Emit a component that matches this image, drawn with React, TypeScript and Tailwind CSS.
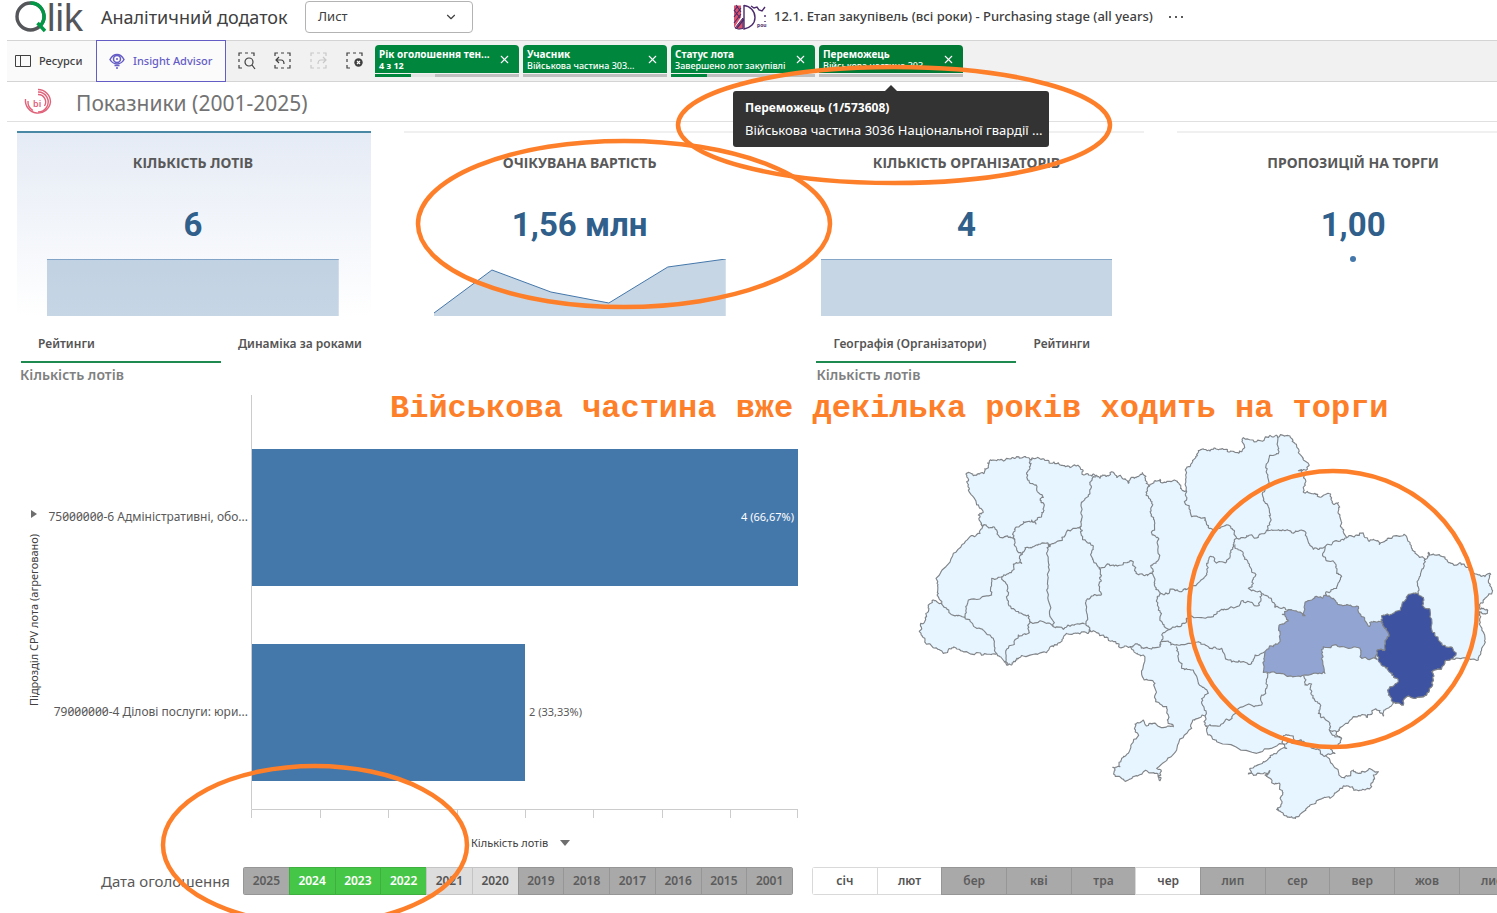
/**
 * Analytics dashboard: KPI cards, CPV bar chart, region map and date filters,
 * with hand-drawn style notes laid over the sheet.
 */

import { ChevronDown, X } from 'lucide-react';
import clsx from 'clsx';
import type { ReactNode } from 'react';

type Point = [number, number];

interface Selection {
  title: string;
  value: string;
  bold?: boolean;
  hovered?: boolean;
  // progress segments in percent of the chip width
  green: number;
  light: number;
}

const SELECTIONS: Selection[] = [
  { title: 'Рік оголошення тен...', value: '4 з 12', bold: true, green: 25, light: 17 },
  { title: 'Учасник', value: 'Військова частина 303...', green: 0, light: 0 },
  { title: 'Статус лота', value: 'Завершено лот закупівлі', green: 25, light: 0 },
  { title: 'Переможець', value: 'Військова частина 303...', hovered: true, green: 0, light: 0 },
];

const KPIS: { title: string; value: string; points: Point[]; active?: boolean }[] = [
  { title: 'КІЛЬКІСТЬ ЛОТІВ', value: '6', points: [[0, 0], [292, 0]], active: true },
  {
    title: 'ОЧІКУВАНА ВАРТІСТЬ',
    value: '1,56 млн',
    points: [[0, 54], [58, 11], [117, 33], [175, 44], [234, 8], [292, 0]],
  },
  { title: 'КІЛЬКІСТЬ ОРГАНІЗАТОРІВ', value: '4', points: [[0, 0], [292, 0]] },
  { title: 'ПРОПОЗИЦІЙ НА ТОРГИ', value: '1,00', points: [] },
];

const YEARS = ['2025', '2024', '2023', '2022', '2021', '2020', '2019', '2018', '2017', '2016', '2015', '2001'];
const MONTHS = ['січ', 'лют', 'бер', 'кві', 'тра', 'чер', 'лип', 'сер', 'вер', 'жов', 'лис', 'гру'];

const BARS = [
  { label: '75000000-6 Адміністративні, обо...', value: '4 (66,67%)', y: 62, width: 546 },
  { label: '79000000-4 Ділові послуги: юри...', value: '2 (33,33%)', y: 257, width: 273 },
];

const TICKS = [251, 320, 388, 457, 525, 593, 662, 730, 797];

const MAINLAND =
  '198,162 205,157 225,165 240,160 262,145 268,123 290,122 330,117 350,110 390,118 400,115 432,117 462,126 490,137 512,142 538,140 546,163 565,165 590,166 600,175 615,165 625,168 640,157 650,172 662,167 675,176 685,190 692,175 708,173 727,158 740,185 745,200 762,185 780,178 790,188 828,182 842,195 850,212 860,215 857,165 865,140 885,115 895,92 930,93 945,85 980,88 1005,97 1028,88 1030,53 1085,63 1110,46 1132,50 1170,48 1190,78 1195,97 1210,115 1227,135 1222,148 1195,152 1212,165 1215,190 1210,217 1245,220 1255,230 1292,222 1298,250 1315,248 1320,285 1325,322 1340,353 1370,345 1390,340 1405,362 1420,358 1438,373 1470,355 1512,343 1530,372 1545,395 1575,417 1583,412 1585,397 1600,402 1630,410 1650,428 1668,435 1680,428 1700,442 1725,462 1755,470 1772,463 1765,482 1777,515 1750,540 1738,555 1740,568 1760,568 1762,575 1750,582 1738,575 1738,612 1755,655 1745,685 1735,720 1667,715 1645,720 1625,745 1595,755 1595,790 1580,825 1520,830 1505,855 1480,848 1455,870 1450,888 1440,872 1425,868 1402,892 1395,884 1360,890 1320,922 1310,935 1325,955 1315,978 1290,982 1305,1000 1270,1007 1260,990 1230,975 1200,960 1170,947 1150,952 1150,972 1070,1000 950,965 925,945 920,920 917,918 915,888 880,900 875,925 830,990 770,1045 783,1050 780,1082 768,1060 740,1052 702,1070 685,1080 645,1065 638,1042 660,1040 665,1015 685,1000 713,950 705,912 730,900 737,915 760,910 782,922 820,920 802,900 800,860 767,845 765,790 727,770 730,705 702,695 690,680 660,683 640,665 610,645 568,628 565,640 530,640 500,640 490,655 460,680 440,698 370,708 350,715 335,735 320,735 300,710 290,700 250,705 200,695 160,683 130,700 100,683 75,660 58,635 62,610 80,590 85,560 100,540 125,552 115,520 108,475 160,400 210,350 240,340 243,312 235,285 248,278 230,255 205,210 200,185 198,162';

const CRIMEA =
  '1150,972 1160,985 1115,1005 1090,1025 1050,1045 1045,1062 1070,1062 1110,1052 1095,1065 1115,1088 1140,1092 1148,1120 1142,1160 1130,1168 1150,1180 1170,1192 1195,1190 1225,1160 1260,1138 1290,1135 1320,1105 1345,1098 1370,1110 1415,1100 1420,1065 1435,1055 1405,1048 1380,1060 1360,1050 1352,1067 1325,1072 1280,1010 1258,985 1200,962 1150,972';

const DNIPRO =
  '1215,587 1215,548 1235,540 1255,532 1280,527 1300,535 1325,555 1370,558 1385,590 1405,618 1420,605 1447,605 1458,625 1462,655 1455,688 1432,690 1430,718 1385,715 1380,685 1325,680 1270,680 1265,715 1275,760 1240,760 1180,770 1140,760 1090,757 1095,695 1120,680 1140,660 1137,617 1165,603 1147,583 1175,570 1215,587';

const DONETSK =
  '1445,587 1475,583 1505,560 1525,523 1555,522 1572,540 1572,562 1590,568 1595,628 1615,660 1645,682 1668,705 1645,720 1625,745 1595,755 1595,790 1580,825 1520,830 1505,855 1480,848 1470,830 1463,810 1495,785 1475,765 1455,740 1435,722 1432,690 1455,688 1462,655 1458,625 1447,605 1445,587';

// Inner borders between regions
const BORDERS = [
  '390,118 388,140 383,165 390,190 410,205 430,232 420,240 433,255 425,285 410,300 408,312 395,300 370,305 345,325 340,345 345,358',
  '243,312 262,320 285,325 305,353 325,352 345,358',
  '345,358 350,390 362,405 365,430 340,432 335,455 305,470',
  '362,405 375,383 400,380 415,373 445,372 450,380 480,362 500,335 540,320',
  '590,166 570,190 565,225 543,255 545,300 540,320',
  '540,320 548,350 560,365 580,378 575,410 597,442',
  '597,442 630,437 665,435 700,425 708,460 735,467 757,460',
  '745,200 738,225 755,250 752,280 763,300 757,345 773,352 777,415 755,435 757,460',
  '597,442 603,470 598,490 605,522 570,535 558,545 558,605 568,628',
  '445,372 440,400 448,450 440,510 450,590 460,620',
  '305,470 315,485 322,540 345,570 385,585 390,605 430,605 460,620 490,628 515,615 558,612',
  '305,470 275,475 275,525 205,540 195,592 150,580 125,552',
  '195,592 230,625 250,630 280,655 290,700',
  '390,605 388,638 355,645 325,685 320,735',
  '757,460 765,500 780,522',
  '780,522 800,520 810,507 845,515 870,500 885,497 915,470 920,430 935,410 945,425 980,425 990,400 1000,375 1010,355',
  '780,522 770,545 780,590 805,628 785,645 783,665',
  '805,628 840,620 860,605 875,588 940,590 965,568 1010,560 1030,543 1070,558 1080,530 1085,520',
  '690,680 715,675 730,685 780,680 783,665 825,675 870,670 895,665 925,680 965,685 985,720 1030,725 1055,730 1065,705 1095,695',
  '1005,373 1030,400 1045,430 1065,460 1060,490 1045,505 1085,520',
  '1085,520 1115,540 1125,562 1165,570 1175,570',
  '860,215 853,245 875,290 915,293 925,320 940,330 985,315 1000,330 1010,355',
  '1010,355 1040,347 1075,352 1100,330',
  '1132,50 1137,95 1105,125 1103,170 1093,215 1090,240 1108,270 1108,310 1100,330',
  '1100,330 1140,332 1175,338 1205,330 1220,350 1240,388 1275,380 1310,362 1340,353',
  '1275,380 1270,410 1305,430 1310,460 1325,470 1310,505 1280,515 1280,527',
  '1575,417 1565,450 1555,480 1555,522',
  '828,680 835,705 845,745 880,750 895,790 925,820 905,845 915,888',
  '1100,760 1100,805 1085,825 1085,855 1020,862 985,900 960,918 917,918',
  '1210,768 1215,795 1235,792 1235,825 1258,850 1255,880 1290,910 1288,930 1325,955',
  '1288,930 1310,935',
];

function noise(a: number, b: number) {
  const n = Math.sin(a * 12.9898 + b * 78.233) * 43758.5453;
  return n - Math.floor(n) - 0.5;
}

/**
 * Splits every segment a few times with a small repeatable offset, taken from
 * the midpoint, so that a border shared by two regions gets the same shape.
 */
function roughen(source: string) {
  let pts = source.split(' ').map((p) => p.split(',').map(Number) as Point);
  for (let pass = 0; pass < 3; pass++) {
    const next: Point[] = [pts[0]];
    for (let i = 1; i < pts.length; i++) {
      const a = pts[i - 1];
      const b = pts[i];
      const mx = (a[0] + b[0]) / 2;
      const my = (a[1] + b[1]) / 2;
      const len = Math.hypot(b[0] - a[0], b[1] - a[1]);
      const amp = Math.min(len * 0.7, 9);
      next.push([mx + noise(mx, my) * amp, my + noise(my, mx) * amp], b);
    }
    pts = next;
  }
  return pts.map((p) => p.map((v) => v.toFixed(1)).join(',')).join(' ');
}

function QlikLogo() {
  return (
    <svg width="70" height="34" viewBox="0 0 70 34" className="overflow-visible" aria-label="Qlik">
      <circle cx="15.5" cy="16.5" r="13.5" fill="none" stroke="#54565a" strokeWidth="3.4" />
      <path d="M15.5 3A13.5 13.5 0 0 1 25.4 25.7" fill="none" stroke="#009845" strokeWidth="3.4" />
      <path d="M22.5 23L30 31" stroke="#009845" strokeWidth="3.4" />
      <text x="32" y="31" fontSize="38" fill="#54565a" fontFamily="Liberation Sans, sans-serif">
        lik
      </text>
    </svg>
  );
}

function AppIcon() {
  return (
    <svg width="34" height="26" viewBox="0 0 34 26" fill="none" className="overflow-visible">
      <path d="M1 1.500H8V13L1 24Z" fill="#d9536f" />
      <path d="M1 7L5 2M1 13L8 4M1 19L8 10M3 1L8 8M1 6L7 14" stroke="#4b2a6b" strokeWidth="1.100" />
      <path d="M2 24L10 14V24.500Q5 26 2 24Z" fill="#d9536f" stroke="#4b2a6b" />
      <path d="M11 1V15M11 1.500C17 2 22 7 22 13.500S17 24 11 25V15L4 24" stroke="#4b2a6b" strokeWidth="1.400" />
      <path d="M18 2L21 4L24 3L26 6L29 7L32 3M32 11V13M32 17V18" stroke="#4b2a6b" strokeWidth="1.400" />
      <text x="24" y="23" fontSize="5" fill="#4b2a6b" fontWeight="700" fontFamily="Noto Sans, sans-serif">pou</text>
    </svg>
  );
}

function BiLogo() {
  return (
    <svg width="28" height="28" viewBox="0 0 28 28" fill="none" stroke="#e0637a" strokeWidth="1.400">
      <path d="M1.500 11A12.500 12.500 0 0 0 26.500 14A12.500 12.500 0 0 0 14 1.500" />
      <path d="M14 4A10 10 0 0 1 22.500 19.500A10 10 0 0 1 14 24" />
      <path d="M14 6.500A7.500 7.500 0 0 1 20.500 18" />
      <path d="M4 13A10 10 0 0 0 9 22.500" />
      <text x="9" y="18.500" fontSize="9" fontWeight="600" stroke="none" fill="#e0637a" fontFamily="Noto Sans, sans-serif">bi</text>
    </svg>
  );
}

function InsightIcon() {
  return (
    <svg width="16" height="16" viewBox="0 0 16 16" fill="none" stroke="#655dc6" strokeWidth="1.500">
      <path d="M1 6.500C3 3 5.500 1.500 8 1.500S13 3 15 6.500C14 8.500 11 11 8 11S2 8.500 1 6.500Z" />
      <circle cx="8" cy="6" r="3.500" />
      <circle cx="8" cy="6" r="1" fill="#655dc6" stroke="none" />
      <path d="M5.500 12.500H10.500M7 15H9" />
    </svg>
  );
}

function ToolButton({ label, disabled, children }: { label: string; disabled?: boolean; children: ReactNode }) {
  return (
    <button
      type="button"
      aria-label={label}
      disabled={disabled}
      className={clsx('flex h-full w-9 items-center justify-center', disabled ? 'text-[#c8c8c8]' : 'text-[#404040]')}
    >
      <svg width="18" height="18" viewBox="0 0 18 18" fill="none" stroke="currentColor" strokeWidth="1.200">
        {children}
      </svg>
    </button>
  );
}

function SelectionChip({ title, value, bold, hovered, green, light }: Selection) {
  return (
    <div className="relative w-36">
      <div className={clsx('flex h-7 items-center rounded-t pl-1 pr-2 text-white', hovered ? 'bg-[#007a35]' : 'bg-[#00873d]')}>
        <div className="min-w-0 flex-1 whitespace-nowrap">
          <div className="h-3 text-[10px] font-bold leading-3">{title}</div>
          <div className={clsx('h-[11px] text-[9px] leading-[11px]', bold ? 'font-bold' : 'font-medium')}>{value}</div>
        </div>
        <button type="button" aria-label={`Очистити ${title}`}>
          <X size={13} strokeWidth={2} />
        </button>
      </div>
      <div className="mt-px flex h-[3px] bg-[#bfbfbf]">
        <div className="bg-[#00873d]" style={{ width: `${green}%` }} />
        <div className="bg-[#e4e4e4]" style={{ width: `${light}%` }} />
      </div>
      {hovered && (
        <div role="tooltip" className="absolute left-1/2 top-[46px] z-10 w-[316px] -translate-x-1/2 rounded-[3px] bg-[#333] px-3 py-[6px] text-white">
          <svg className="absolute -top-[6px] left-1/2 -translate-x-1/2" width="12" height="6" viewBox="0 0 12 6">
            <path d="M0 6L6 0L12 6Z" fill="#333" />
          </svg>
          <div className="text-[12px] font-bold leading-[22px]">Переможець (1/573608)</div>
          <div className="whitespace-nowrap text-[13px] leading-[22px]">Військова частина 3036 Національної гвардії ...</div>
        </div>
      )}
    </div>
  );
}

function KpiCard({ title, value, points, active }: (typeof KPIS)[number]) {
  const line = points.map((p) => p.join(',')).join(' ');
  return (
    <div
      className={clsx(
        'flex h-[185px] flex-col items-center border-t-2 pl-[30px] pr-8',
        active ? 'border-[#4a89a5] bg-linear-to-b from-[#e5ebf5] to-white' : 'border-[#f0f0f0]',
      )}
    >
      <h2 className="mt-[18px] whitespace-nowrap text-[14px] font-bold leading-6 text-[#595959]">{title}</h2>
      <div className="mt-[30px] font-[Roboto,sans-serif] text-[33px] font-bold leading-10 text-[#2f5f8a]">{value}</div>
      {points.length > 0 ? (
        <svg className="mt-auto h-[57px] w-full" viewBox="0 0 292 57" preserveAspectRatio="none">
          <polygon points={`${line} 292,57 0,57`} fill="#4477aa" fillOpacity="0.3" />
          <polyline points={line} fill="none" stroke="#4477aa" vectorEffect="non-scaling-stroke" />
        </svg>
      ) : (
        <div className="mt-[11px] size-[6px] rounded-full bg-[#4477aa]" />
      )}
    </div>
  );
}

function Tabs({ items }: { items: string[] }) {
  return (
    <div role="tablist" className="flex h-[37px] text-[12px] font-semibold text-[#545454]">
      {items.map((item, i) => (
        <button
          key={item}
          type="button"
          role="tab"
          aria-selected={i === 0}
          className={clsx('w-[200px] whitespace-nowrap border-b-2 pl-[17px] text-left', i === 0 ? 'border-[#1f8a50]' : 'border-transparent')}
        >
          {item}
        </button>
      ))}
    </div>
  );
}

function BarChart() {
  return (
    <svg width="812" height="470" viewBox="0 0 812 470" className="text-[11px]" fill="#595959">
      <path d="M31 123L37 127L31 131Z" fill="#6e6e6e" />
      <text transform="translate(38 319) rotate(-90)" fill="#404040">
        Підрозділ CPV лота (агреговано)
      </text>
      {BARS.map((bar, i) => (
        <g key={bar.label}>
          <text x="248" y={bar.y + 72} textAnchor="end" className="text-[12px] [font-feature-settings:'zero']">
            {bar.label}
          </text>
          <rect x="252" y={bar.y} width={bar.width} height="137" fill="#4477aa" />
          {i === 0 ? (
            <text x="794" y={bar.y + 72} textAnchor="end" fill="#fff">{bar.value}</text>
          ) : (
            <text x={256 + bar.width} y={bar.y + 72}>{bar.value}</text>
          )}
        </g>
      ))}
      <path d={`M251.500 8V422.500H798${TICKS.map((x) => `M${x + 0.5} 423V431`).join('')}`} fill="none" stroke="#ccc" />
      <text x="471" y="460" fill="#404040">Кількість лотів</text>
      <path d="M560 453H570L565 459Z" fill="#6e6e6e" />
    </svg>
  );
}

function RegionMap() {
  return (
    <svg width="597" height="410" viewBox="0 0 1791 1230" fill="none" stroke="#808488" strokeWidth="3.400" strokeLinejoin="round">
      <polygon points={roughen(CRIMEA)} fill="#e6f5ff" />
      <polygon points={roughen(MAINLAND)} fill="#e6f5ff" />
      {BORDERS.map((border) => (
        <polyline key={border} points={roughen(border)} />
      ))}
      <polygon points={roughen(DNIPRO)} fill="#92a4d2" />
      <polygon points={roughen(DONETSK)} fill="#3d52a1" />
    </svg>
  );
}

function yearStyle(index: number) {
  if (index >= 1 && index <= 3) return 'border-[#3fb03f] bg-[#46c646] text-white';
  if (index === 4 || index === 5) return 'border-[#c4c4c4] bg-[#ddd] text-[#545454]';
  return 'border-[#969696] bg-[#a9a9a9] text-[#5c5c5c]';
}

function monthStyle(index: number) {
  return [0, 1, 5].includes(index)
    ? 'border-[#d9d9d9] bg-white text-[#545454]'
    : 'border-[#969696] bg-[#a9a9a9] text-[#5c5c5c]';
}

function FilterStrip({ items, style }: { items: string[]; style: (index: number) => string }) {
  return (
    <div className="flex h-7 flex-1 overflow-hidden rounded-[3px] text-[12px] font-semibold">
      {items.map((item, i) => (
        <button key={item} type="button" className={clsx('min-w-0 flex-1 border-y border-l last:border-r', style(i))}>
          {item}
        </button>
      ))}
    </div>
  );
}

/**
 * Orange marker notes drawn over the sheet
 */
function Annotations() {
  return (
    <>
      <svg className="pointer-events-none absolute inset-0 z-20 h-full w-full" fill="none" stroke="#fd7f2a" strokeWidth="4.500">
        <ellipse cx="894" cy="125" rx="216" ry="58" />
        <ellipse cx="624" cy="224" rx="206" ry="83" />
        <ellipse cx="315" cy="845" rx="152" ry="79" />
        <ellipse cx="1333" cy="609" rx="144" ry="138" />
      </svg>
      <p className="absolute left-[390px] top-[391px] z-20 whitespace-nowrap font-['Liberation_Mono',monospace] text-[32px] font-bold leading-9 text-[#fd7f2a]">
        Військова частина вже декілька років ходить на торги
      </p>
    </>
  );
}

export default function App() {
  return (
    <div className="relative min-h-screen overflow-hidden bg-white font-['Noto_Sans',sans-serif] text-[#404040]">
      <header className="flex h-10 items-center">
        <div className="flex w-[733px] shrink-0 items-center pb-[6px] pl-[15px]">
          <QlikLogo />
          <span className="ml-4 w-[204px] whitespace-nowrap text-[18px]">Аналітичний додаток</span>
          <button type="button" className="flex h-8 w-[168px] items-center justify-between rounded border border-[#b3b3b3] pl-3 pr-[14px] text-[13px]">
            Лист
            <ChevronDown size={14} strokeWidth={2} />
          </button>
        </div>
        <div className="flex items-center pb-[6px]">
          <AppIcon />
          <h1 className="ml-[7px] whitespace-nowrap text-[13px] font-medium">12.1. Етап закупівель (всі роки) - Purchasing stage (all years)</h1>
          <button type="button" aria-label="Більше" className="ml-4 flex gap-1">
            <span className="size-[2px] bg-[#595959]" />
            <span className="size-[2px] bg-[#595959]" />
            <span className="size-[2px] bg-[#595959]" />
          </button>
        </div>
      </header>

      <div className="ml-[7px] flex h-[42px] border-y border-[#d4d4d4] bg-[#f1f1f1]">
        <button type="button" className="flex w-[89px] items-center gap-2 bg-[#fafafa] pl-2 text-[11px] font-medium">
          <svg width="16" height="12" viewBox="0 0 16 12" fill="none" stroke="#404040">
            <path d="M0.500 0.500H15.500V11.500H0.500ZM5.500 0.500V11.500" />
          </svg>
          Ресурси
        </button>
        <button
          type="button"
          className="-my-px flex w-[130px] items-center gap-2 border border-[#655dc6] bg-[#fbfbfb] pl-3 text-[11px] font-medium text-[#655dc6]"
        >
          <InsightIcon />
          Insight Advisor
        </button>
        <div className="ml-[3px] flex">
          <ToolButton label="Розумний пошук">
            <path d="M1 4V1H4M7 1H10M13 1H16V4M1 7V10M1 13V16H4" />
            <circle cx="11" cy="10" r="4" />
            <path d="M14 13L17 17" />
          </ToolButton>
          <ToolButton label="Крок назад">
            <path d="M1 4V1H4M7 1H10M13 1H16V4M16 7V10M16 13V16H13M10 16H7M4 16H1V13" />
            <path d="M5 5L2 8L5 11M2 8H7Q10 8 10 12" />
          </ToolButton>
          <ToolButton label="Крок вперед" disabled>
            <path d="M1 4V1H4M7 1H10M13 1H16V4M16 13V16H13M10 16H7M4 16H1V13M1 10V7" />
            <path d="M13 5L16 8L13 11M16 8H11Q8 8 8 12" />
          </ToolButton>
          <ToolButton label="Очистити вибір">
            <path d="M1 4V1H4M7 1H10M13 1H16V4M1 7V10M1 13V16H4" />
            <circle cx="12.500" cy="10.500" r="4.200" fill="currentColor" stroke="none" />
            <path d="M11 9L14 12M14 9L11 12" stroke="#fff" />
          </ToolButton>
        </div>
        <div className="ml-[2px] flex gap-1 pt-1">
          {SELECTIONS.map((selection) => (
            <SelectionChip key={selection.title} {...selection} />
          ))}
        </div>
      </div>

      <div className="ml-[7px] flex h-10 items-center gap-6 border-b border-[#e0e0e0] pl-[17px]">
        <BiLogo />
        <h2 className="pt-1 text-[21px] text-[#737373]">Показники (2001-2025)</h2>
      </div>

      {/* The sheet is slightly wider than the window and runs off to the right */}
      <main className="-mr-[34px]">
        <section className="grid grid-cols-4 gap-[33px] pl-[17px] pt-[9px]">
          {KPIS.map((kpi) => (
            <KpiCard key={kpi.title} {...kpi} />
          ))}
        </section>

        <div className="mt-[10px] flex">
          <section className="w-[53%] shrink-0">
            <div className="pl-[21px]">
              <Tabs items={['Рейтинги', 'Динаміка за роками']} />
            </div>
            <h3 className="pl-5 text-[14px] font-semibold leading-6 text-[#808080]">Кількість лотів</h3>
            <BarChart />
          </section>
          <section className="pl-[5px]">
            <Tabs items={['Географія (Організатори)', 'Рейтинги']} />
            <h3 className="text-[14px] font-semibold leading-6 text-[#808080]">Кількість лотів</h3>
            <div className="pl-[84px] pt-[33px]">
              <RegionMap />
            </div>
          </section>
        </div>

        <div className="mt-[10px] flex pb-[18px]">
          <div className="flex w-[793px] shrink-0 items-center gap-[13px]">
            <span className="w-[230px] text-right text-[15px] text-[#595959]">Дата оголошення</span>
            <FilterStrip items={YEARS} style={yearStyle} />
          </div>
          <div className="ml-[19px] flex w-[777px] shrink-0">
            <FilterStrip items={MONTHS} style={monthStyle} />
          </div>
        </div>
      </main>

      <Annotations />
    </div>
  );
}
